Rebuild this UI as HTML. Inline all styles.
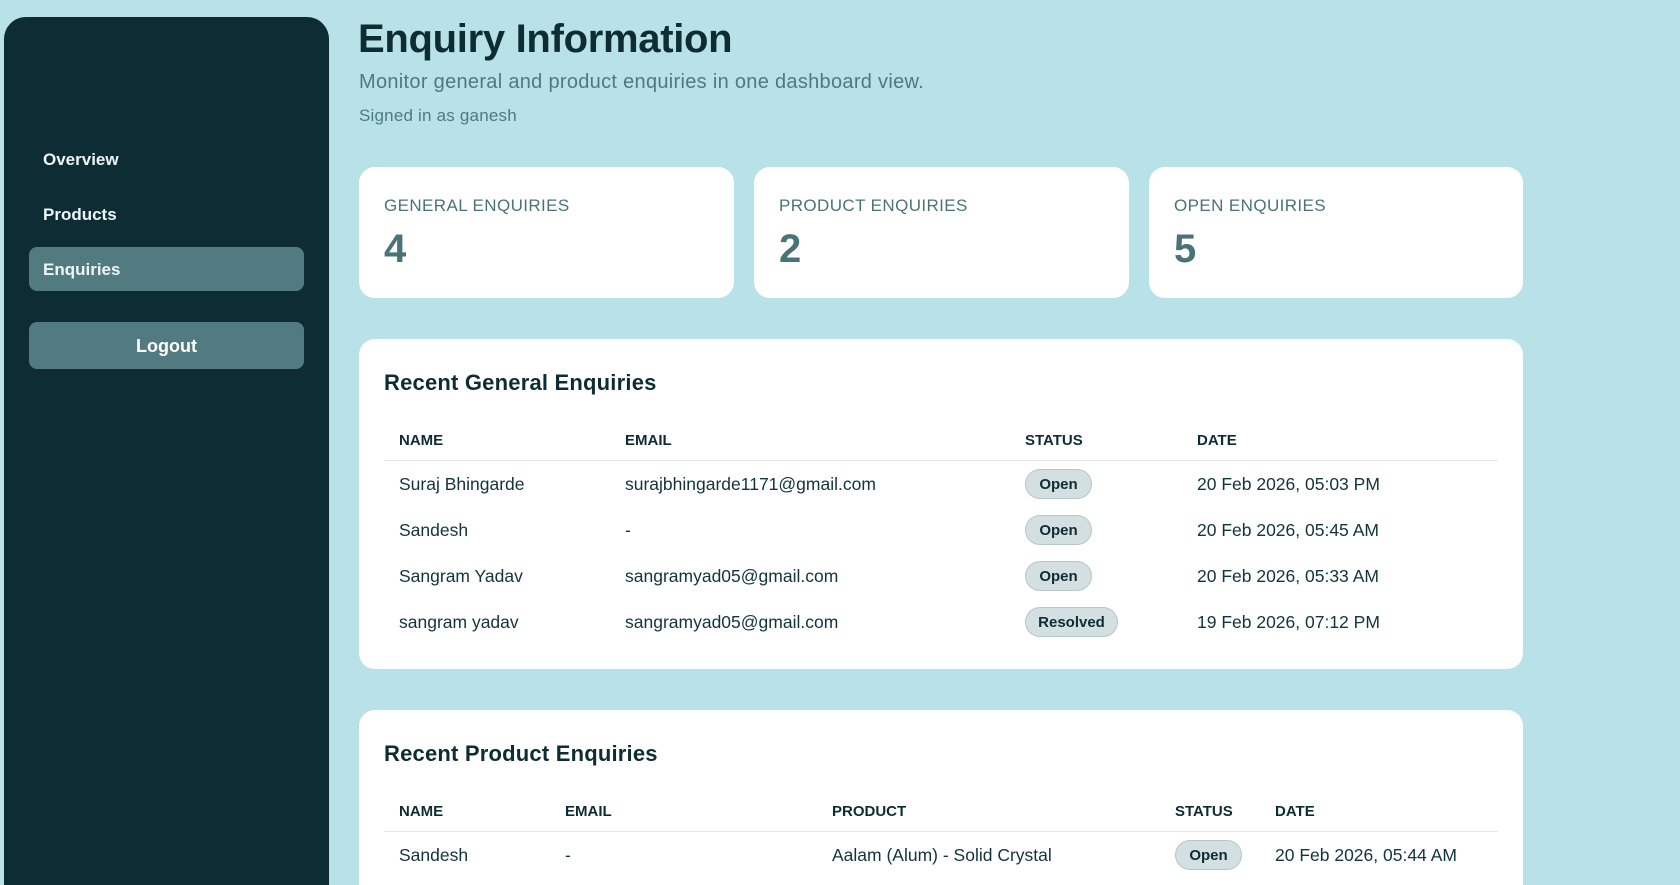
<!DOCTYPE html>
<html><head><meta charset="utf-8"><style>
*{box-sizing:border-box;margin:0;padding:0}
html,body{width:1680px;height:885px;overflow:hidden}
body{background:#b8e2e7;font-family:"Liberation Sans",sans-serif;color:#12343b;position:relative}
.side{position:absolute;left:4px;top:17px;width:325px;height:868px;background:#0d2c33;border-radius:22px 22px 0 0}
.nav{position:absolute;left:29px;width:275px;height:44px;border-radius:8px;color:#eef5f6;font-weight:bold;font-size:17px;line-height:46px;padding-left:14px}
.act{background:#517b80}
.logout{position:absolute;left:29px;top:322px;width:275px;height:47px;border-radius:8px;background:#517b80;color:#fff;font-weight:bold;font-size:18px;text-align:center;line-height:49px}
h1{position:absolute;left:358px;top:17px;font-size:40px;font-weight:bold;color:#0d2c33;letter-spacing:-0.3px}
.sub{position:absolute;left:359px;top:71px;font-size:20px;color:#4d7a80;letter-spacing:0.3px}
.sig{position:absolute;left:359px;top:106px;font-size:17px;color:#4d7a80;letter-spacing:0.2px}
.card{position:absolute;background:#fff;border-radius:16px}
.lab{position:absolute;left:25px;top:29px;font-size:17px;color:#4a7378;letter-spacing:0.4px}
.num{position:absolute;left:25px;top:60px;font-size:40px;font-weight:bold;color:#4a7378}
.tt{position:absolute;left:25px;top:31px;font-size:22px;font-weight:bold;color:#0d2c33;letter-spacing:0.2px}
.th{position:absolute;font-size:15px;font-weight:bold;color:#0d2c33}
.td{position:absolute;font-size:17.5px;color:#12343b}
.line{position:absolute;left:25px;right:25px;height:1px;background:#e2e8e9}
.b{position:absolute;height:30px;border-radius:15px;background:#d3dfe0;border:1px solid #b5c7c9;font-size:15px;font-weight:bold;line-height:30px;text-align:center;color:#0d2c33}
</style></head><body>
<div class="side"></div>
<div class="nav" style="top:137px">Overview</div>
<div class="nav" style="top:192px">Products</div>
<div class="nav act" style="top:247px">Enquiries</div>
<div class="logout">Logout</div>

<h1>Enquiry Information</h1>
<div class="sub">Monitor general and product enquiries in one dashboard view.</div>
<div class="sig">Signed in as ganesh</div>

<div class="card" style="left:359px;top:167px;width:375px;height:131px"><div class="lab">GENERAL ENQUIRIES</div><div class="num">4</div></div>
<div class="card" style="left:754px;top:167px;width:375px;height:131px"><div class="lab">PRODUCT ENQUIRIES</div><div class="num">2</div></div>
<div class="card" style="left:1149px;top:167px;width:374px;height:131px"><div class="lab">OPEN ENQUIRIES</div><div class="num">5</div></div>

<div class="card" style="left:359px;top:339px;width:1164px;height:330px">
<div class="tt">Recent General Enquiries</div>
<div class="th" style="left:40px;top:93px">NAME</div>
<div class="th" style="left:266px;top:93px">EMAIL</div>
<div class="th" style="left:666px;top:93px">STATUS</div>
<div class="th" style="left:838px;top:93px">DATE</div>
<div class="line" style="top:121px"></div>
<div class="td" style="left:40px;top:135px">Suraj Bhingarde</div><div class="td" style="left:266px;top:135px">surajbhingarde1171@gmail.com</div><div class="b" style="left:666px;top:130px;width:67px">Open</div><div class="td" style="left:838px;top:135px">20 Feb 2026, 05:03 PM</div>
<div class="td" style="left:40px;top:181px">Sandesh</div><div class="td" style="left:266px;top:181px">-</div><div class="b" style="left:666px;top:176px;width:67px">Open</div><div class="td" style="left:838px;top:181px">20 Feb 2026, 05:45 AM</div>
<div class="td" style="left:40px;top:227px">Sangram Yadav</div><div class="td" style="left:266px;top:227px">sangramyad05@gmail.com</div><div class="b" style="left:666px;top:222px;width:67px">Open</div><div class="td" style="left:838px;top:227px">20 Feb 2026, 05:33 AM</div>
<div class="td" style="left:40px;top:273px">sangram yadav</div><div class="td" style="left:266px;top:273px">sangramyad05@gmail.com</div><div class="b" style="left:666px;top:268px;width:93px">Resolved</div><div class="td" style="left:838px;top:273px">19 Feb 2026, 07:12 PM</div>
</div>

<div class="card" style="left:359px;top:710px;width:1164px;height:175px;border-radius:16px 16px 0 0">
<div class="tt">Recent Product Enquiries</div>
<div class="th" style="left:40px;top:93px">NAME</div>
<div class="th" style="left:206px;top:93px">EMAIL</div>
<div class="th" style="left:473px;top:93px">PRODUCT</div>
<div class="th" style="left:816px;top:93px">STATUS</div>
<div class="th" style="left:916px;top:93px">DATE</div>
<div class="line" style="top:121px"></div>
<div class="td" style="left:40px;top:135px">Sandesh</div><div class="td" style="left:206px;top:135px">-</div><div class="td" style="left:473px;top:135px">Aalam (Alum) - Solid Crystal</div><div class="b" style="left:816px;top:130px;width:67px">Open</div><div class="td" style="left:916px;top:135px">20 Feb 2026, 05:44 AM</div>
</div>
</body></html>
